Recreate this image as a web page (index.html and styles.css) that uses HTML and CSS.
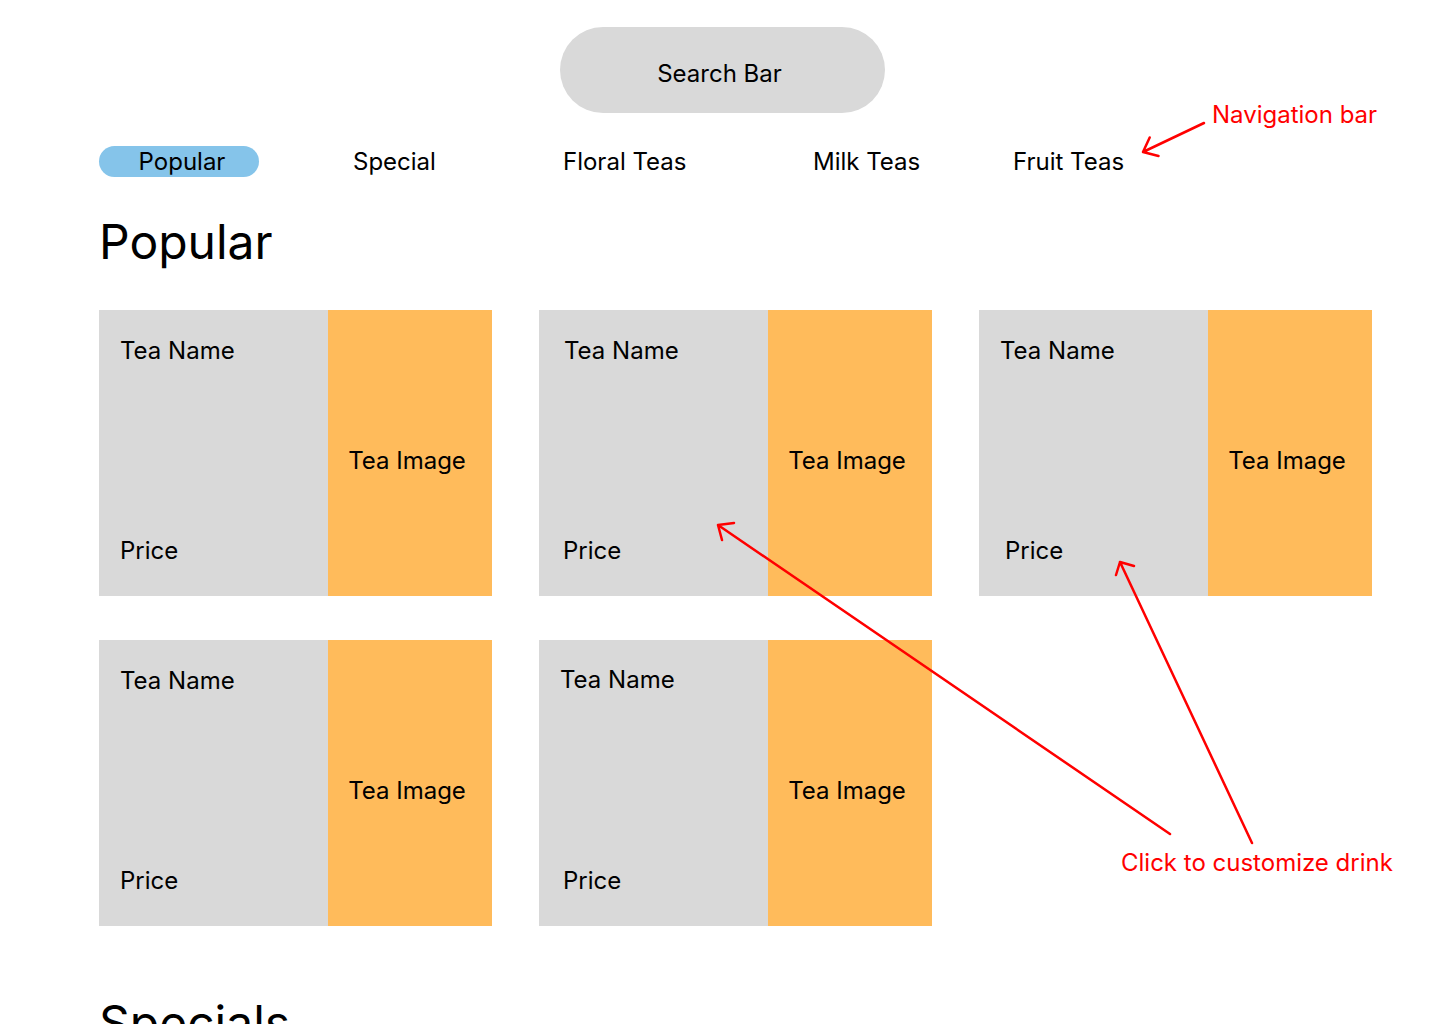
FILE: index.html
```html
<!DOCTYPE html>
<html lang="en">
<head>
<meta charset="utf-8">
<title>Tea Menu</title>
<link rel="stylesheet" href="styles.css">
</head>
<body>
<div class="page">
  <header class="top">
    <div class="search">Search Bar</div>
  </header>
  <nav class="nav">
    <span class="nav-item active">Popular</span>
    <span class="nav-item">Special</span>
    <span class="nav-item">Floral Teas</span>
    <span class="nav-item">Milk Teas</span>
    <span class="nav-item">Fruit Teas</span>
  </nav>

  <h1 class="section-title">Popular</h1>
  <section class="grid">
    <div class="card">
      <div class="info"><span>Tea Name</span><span>Price</span></div>
      <div class="image">Tea Image</div>
    </div>
    <div class="card card-b">
      <div class="info"><span>Tea Name</span><span>Price</span></div>
      <div class="image">Tea Image</div>
    </div>
    <div class="card card-c">
      <div class="info"><span>Tea Name</span><span class="price-shift">Price</span></div>
      <div class="image">Tea Image</div>
    </div>
    <div class="card">
      <div class="info"><span>Tea Name</span><span>Price</span></div>
      <div class="image">Tea Image</div>
    </div>
    <div class="card card-e">
      <div class="info"><span class="name-shift">Tea Name</span><span>Price</span></div>
      <div class="image">Tea Image</div>
    </div>
  </section>

  <h1 class="section-title specials">Specials</h1>

  <svg class="notes" width="1440" height="1024" viewBox="0 0 1440 1024" xmlns="http://www.w3.org/2000/svg">
    <g fill="none" stroke="#FF0000" stroke-width="2.5" stroke-linecap="round" stroke-linejoin="round">
      <path d="M1204 123 L1143 152 M1149.7 137.5 L1143 152 L1158.5 156"/>
      <path d="M1170 834 L718 525 M734 523 L718 525 L722 540"/>
      <path d="M1252 843 L1120 562 M1134 566 L1120 562 L1116 575"/>
    </g>
    <text x="1212" y="122.5" class="note-text">Navigation bar</text>
    <text x="1121" y="870.5" class="note-text">Click to customize drink</text>
  </svg>
</div>
</body>
</html>
```
FILE: styles.css
```css
* { box-sizing: border-box; }
html, body { margin: 0; padding: 0; background: #ffffff; }
body {
  font-family: Inter, "Noto Sans", "Liberation Sans", sans-serif;
  color: #000000;
  width: 1440px;
  height: 1024px;
  overflow: hidden;
}
.page {
  position: relative;
  width: 1440px;
  height: 1024px;
  padding: 27px 0 0 99px;
}
.top {
  display: flex;
  padding-left: 461px;
}
.search {
  width: 325px;
  height: 86px;
  border-radius: 43px;
  background: #D9D9D9;
  display: flex;
  align-items: center;
  justify-content: center;
  font-size: 24px;
  padding: 7px 6px 0 0;
}
.nav {
  display: grid;
  grid-template-columns: 254px 210px 250px 200px auto;
  margin-top: 33px;
  height: 31px;
  font-size: 24px;
  align-items: center;
}
.nav-item {
  line-height: 31px;
  white-space: nowrap;
}
.nav-item.active {
  width: 160px;
  height: 31px;
  border-radius: 16px;
  background: #85C4EA;
  text-align: center;
  padding-left: 6px;
}
.section-title {
  margin: 36px 0 0 0;
  font-size: 48px;
  line-height: 58px;
  font-weight: 400;
  height: 58px;
}
.specials {
  margin-top: 68px;
}
.grid {
  display: grid;
  grid-template-columns: repeat(3, 393px);
  column-gap: 47px;
  row-gap: 44px;
  margin-top: 39px;
}
.card {
  display: grid;
  grid-template-columns: 229px 164px;
  height: 286px;
  font-size: 24px;
  line-height: 29px;
}
.info {
  background: #D9D9D9;
  display: flex;
  flex-direction: column;
  justify-content: space-between;
  padding: 26px 10px 31px 21px;
}
.card-b .info { padding-left: 25px; }
.card-b .info span:last-child { margin-left: -1px; }
.price-shift { margin-left: 5px; }
.name-shift { margin-left: -4px; margin-top: -1px; }
.card-e .info { padding-left: 25px; }
.card-e .info span:last-child { margin-left: -1px; }
.image {
  background: #FFBB5B;
  display: flex;
  align-items: center;
  justify-content: center;
  padding: 14px 6px 0 0;
}
.notes {
  position: absolute;
  left: 0;
  top: 0;
  pointer-events: none;
}
.note-text {
  font-family: Inter, "Noto Sans", "Liberation Sans", sans-serif;
  font-size: 24px;
  fill: #FF0000;
}
```
